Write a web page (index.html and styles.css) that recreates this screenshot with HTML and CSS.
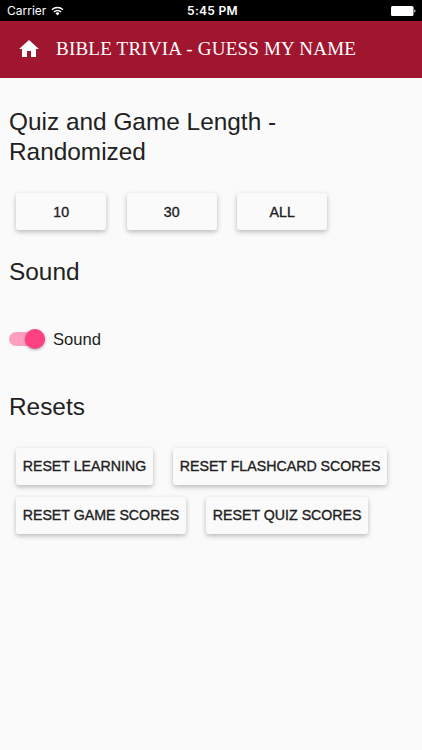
FILE: index.html
```html
<!DOCTYPE html>
<html lang="en">
<head>
    <meta charset="UTF-8">
    <meta name="viewport" content="width=device-width, initial-scale=1.0">
    <title>Bible Trivia - Guess My Name</title>
    <link rel="stylesheet" href="styles.css">
</head>
<body>

    <!-- Status bar -->
    <div class="status-bar">
        <div class="carrier">
            <span>Carrier</span>
            <svg class="wifi" viewBox="0 0 14 10" width="13" height="10">
                <path d="M1 3.7a8.6 8.6 0 0 1 12 0M3.2 6a5.4 5.4 0 0 1 7.6 0" fill="none" stroke="#fff" stroke-width="1.5"/>
                <path d="M7 9.8L4.9 7.5a3 3 0 0 1 4.2 0z" fill="#fff"/>
            </svg>
        </div>
        <div class="clock">5:45 PM</div>
        <svg class="battery" viewBox="0 0 25 10" width="25" height="10">
            <rect width="22.5" height="10" rx="1.5" fill="#fff"/>
            <path d="M23.3 3.4a1.7 1.7 0 0 1 0 3.2z" fill="#fff"/>
        </svg>
    </div>

    <header class="toolbar">
        <svg class="home-icon" viewBox="0 0 24 24" width="24" height="24">
            <path d="M10 20v-6h4v6h5v-8h3L12 3 2 12h3v8z" fill="#fff"/>
        </svg>
        <h1>BIBLE TRIVIA - GUESS MY NAME</h1>
    </header>

    <main class="content">
        <h2>Quiz and Game Length - Randomized</h2>
        <div class="button-row">
            <button>10</button>
            <button>30</button>
            <button>ALL</button>
        </div>

        <h2 class="sound-title">Sound</h2>
        <label class="switch">
            <span class="track"><span class="thumb"></span></span>
            <span class="switch-label">Sound</span>
        </label>

        <h2 class="resets-title">Resets</h2>
        <div class="button-row resets">
            <button>RESET LEARNING</button>
            <button>RESET FLASHCARD SCORES</button>
            <button>RESET GAME SCORES</button>
            <button>RESET QUIZ SCORES</button>
        </div>
    </main>

</body>
</html>
```
FILE: styles.css
```css
* {
    box-sizing: border-box;
}

body {
    margin: 0;
    min-height: 750px;
    background-color: #fafafa;
    color: #212121;
    font-family: "Liberation Sans", Arial, sans-serif;
}

/* Status bar */
.status-bar {
    display: grid;
    grid-template-columns: 1fr auto 1fr;
    align-items: center;
    height: 21px;
    padding: 0 6px 0 7px;
    background-color: #000;
    color: #fff;
    font-family: Inter, sans-serif;
    font-size: 12px;
}

.carrier {
    display: flex;
    align-items: center;
    gap: 5px;
}

.clock {
    padding-left: 2px;
    font-weight: 600;
    letter-spacing: 0.3px;
}

.battery {
    justify-self: end;
}

.toolbar {
    display: flex;
    align-items: center;
    height: 56.5px;
    padding: 0 17px;
    background-color: #a1162f;
    color: #fff;
}

.toolbar h1 {
    margin: 0 0 0 15px;
    font-family: "Liberation Serif", serif;
    font-size: 19px;
    font-weight: normal;
    letter-spacing: 0.22px;
    white-space: nowrap;
}

.content {
    padding: 29px 9px 0;
}

h2 {
    width: 300px;
    margin: 0;
    font-size: 24.4px;
    font-weight: normal;
    line-height: 30.5px;
}

/* Raised buttons */
.button-row {
    display: flex;
    flex-wrap: wrap;
    gap: 12px 20.5px;
    padding: 25.5px 0 0 7.2px;
}

button {
    min-width: 90px;
    height: 37px;
    padding: 0 6.5px;
    border: none;
    border-radius: 3px;
    background-color: #fafafa;
    box-shadow: 0 2px 5px rgba(0, 0, 0, 0.26);
    color: #212121;
    font-family: inherit;
    font-size: 14.2px;
    white-space: nowrap;
    -webkit-text-stroke: 0.35px #212121;
}

.sound-title {
    margin-top: 27px;
}

/* Toggle switch */
.switch {
    display: flex;
    align-items: center;
    height: 26px;
    margin-top: 38px;
}

.track {
    display: flex;
    align-items: center;
    justify-content: flex-end;
    width: 36px;
    height: 14px;
    border-radius: 7px;
    background-color: #ff9fbf;
}

.thumb {
    flex: none;
    width: 20px;
    height: 20px;
    border-radius: 50%;
    background-color: #ff4081;
    box-shadow: 0 1px 3px rgba(0, 0, 0, 0.35);
}

.switch-label {
    margin-left: 8px;
    padding-top: 2px;
    font-size: 16.6px;
}

.resets-title {
    margin-top: 40px;
}
```
